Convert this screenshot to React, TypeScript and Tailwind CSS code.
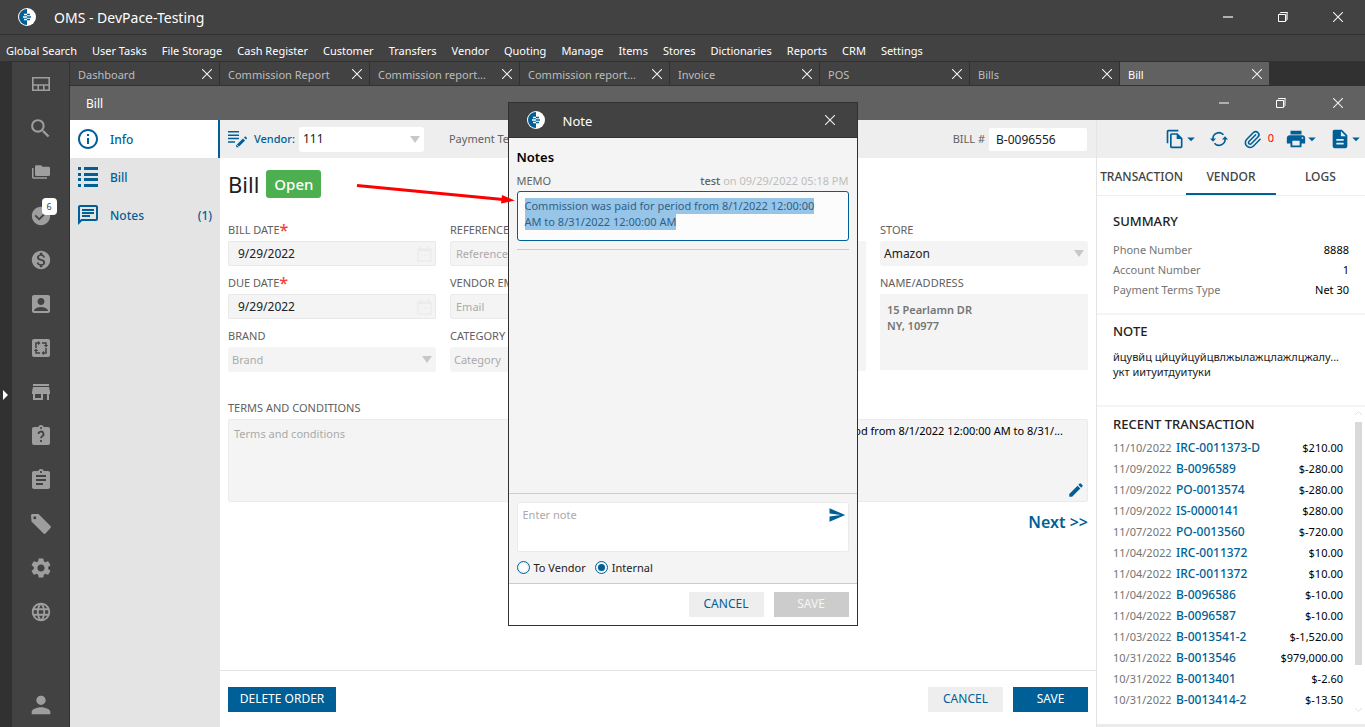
import { useState, type ReactNode } from "react";
import { Paperclip } from "lucide-react";
import {
	MdAccountBox,
	MdArrowDropDown,
	MdAssignment,
	MdCheckCircle,
	MdDescription,
	MdEdit,
	MdInfoOutline,
	MdLanguage,
	MdMonetizationOn,
	MdOutlineChat,
	MdOutlineFileCopy,
	MdPerson,
	MdPrint,
	MdSearch,
	MdSend,
	MdSettings,
	MdStore,
} from "react-icons/md";

const MENU = [
	"Global Search",
	"User Tasks",
	"File Storage",
	"Cash Register",
	"Customer",
	"Transfers",
	"Vendor",
	"Quoting",
	"Manage",
	"Items",
	"Stores",
	"Dictionaries",
	"Reports",
	"CRM",
	"Settings",
];

const TABS = [
	"Dashboard",
	"Commission Report",
	"Commission report...",
	"Commission report...",
	"Invoice",
	"POS",
	"Bills",
	"Bill",
];

const TRANSACTIONS = [
	["11/10/2022", "IRC-0011373-D", "$210.00"],
	["11/09/2022", "B-0096589", "$-280.00"],
	["11/09/2022", "PO-0013574", "$-280.00"],
	["11/09/2022", "IS-0000141", "$280.00"],
	["11/07/2022", "PO-0013560", "$-720.00"],
	["11/04/2022", "IRC-0011372", "$10.00"],
	["11/04/2022", "IRC-0011372", "$10.00"],
	["11/04/2022", "B-0096586", "$-10.00"],
	["11/04/2022", "B-0096587", "$-10.00"],
	["11/03/2022", "B-0013541-2", "$-1,520.00"],
	["10/31/2022", "B-0013546", "$979,000.00"],
	["10/31/2022", "B-0013401", "$-2.60"],
	["10/31/2022", "B-0013414-2", "$-13.50"],
];

export default function App() {
	return (
		<div className="flex h-screen flex-col overflow-hidden bg-[#424242] font-['Noto_Sans',sans-serif] text-[12px] leading-4 text-[#212121]">
			<TitleBar />
			<MenuBar />
			<div className="flex min-h-0 flex-1">
				<div className="flex w-3 shrink-0 items-center bg-[#313131]">
					<svg className="ml-[3px] h-2.5 w-[5px]" viewBox="0 0 5 10">
						<path d="M0 0l5 5-5 5z" fill="#fff" />
					</svg>
				</div>
				<Sidebar />
				<div className="flex min-w-0 flex-1 flex-col">
					<TabStrip />
					<header className="flex h-[34px] shrink-0 items-center bg-[#616161] pl-4 text-white">
						<h1 className="flex-1 pt-0.5">Bill</h1>
						<WindowButtons className="gap-[25px]" />
					</header>
					<div className="flex min-h-0 flex-1 bg-white">
						<SectionNav />
						<BillForm />
						<DetailsPanel />
					</div>
				</div>
			</div>
			<NoteDialog />
		</div>
	);
}

const TitleBar = () => (
	<header className="flex h-[35px] shrink-0 items-center border-b border-[#313131] pl-[18px] text-white">
		<Logo />
		<span className="ml-[18px] flex-1 pt-0.5 text-[14px]">OMS - DevPace-Testing</span>
		<WindowButtons className="gap-[23px]" />
	</header>
);

const MenuBar = () => (
	<nav className="flex h-[27px] shrink-0 items-end gap-[15px] border-b border-[#313131] px-1.5 pb-[2px] text-[11px] text-white">
		{MENU.map((item) => (
			<button key={item} className="whitespace-nowrap">
				{item}
			</button>
		))}
	</nav>
);

const WindowButtons = ({ className }: { className: string }) => (
	<div className={`flex pr-[11px] ${className}`}>
		<button aria-label="Minimize" className="flex h-8 w-8 items-center justify-center">
			<span className="h-0.5 w-2.5 bg-[#b0b0b0]" />
		</button>
		<button aria-label="Restore" className="flex h-8 w-8 items-center justify-center">
			<svg className="size-3" viewBox="0 0 12 12" fill="none" stroke="#fff">
				<path d="M9 3.500l1.500-2v7L9 10z" fill="#b0b0b0" stroke="#b0b0b0" />
				<path d="M1.500 3.500h7v7h-7zM3 2.500l.5-1h7" />
			</svg>
		</button>
		<button aria-label="Close" className="flex h-8 w-8 items-center justify-center">
			<Cross />
		</button>
	</div>
);

const Cross = () => (
	<svg className="size-2.5" viewBox="0 0 10 10" stroke="#f0f0f0" strokeWidth="1.1">
		<path d="M0 0l10 10M10 0L0 10" />
	</svg>
);

const Logo = () => (
	<svg className="size-[18px] shrink-0" viewBox="0 0 18 18">
		<circle cx="9" cy="9" r="9" fill="#fff" />
		<path d="M9 1a8 8 0 0 0 0 16z" fill="#005f96" />
		<path d="M6 6.500h3M5 9h4M6 11.500h3" stroke="#fff" strokeWidth="1.300" />
		<path d="M9 6.500h3M9 9h4M9 11.500h3" stroke="#005f96" strokeWidth="1.300" />
	</svg>
);

const Sidebar = () => (
	<aside className="flex w-[58px] shrink-0 flex-col items-center border-r border-[#313131] text-[#9e9e9e]">
		<SideButton label="Dashboard">
			<svg width="18" height="14" viewBox="0 0 18 14" fill="none" stroke="currentColor" strokeWidth="1.600">
				<path d="M.8.8h16.400v12.400H.8zM.8 8h16.400M6.200 8v5M11.800 8v5" />
			</svg>
		</SideButton>
		<SideButton label="Search">
			<MdSearch size={25} />
		</SideButton>
		<SideButton label="Files">
			<svg width="18" height="16" viewBox="0 0 24 24" preserveAspectRatio="none" fill="currentColor">
				<path d="M22 4h-8l-2-2H6a2 2 0 0 0-2 2v12a2 2 0 0 0 2 2h16a2 2 0 0 0 2-2V6a2 2 0 0 0-2-2M2 6H0v14a2 2 0 0 0 2 2h18v-2H2z" />
			</svg>
		</SideButton>
		<SideButton label="Tasks">
			<MdCheckCircle size={22} />
			<span className="absolute top-1 right-0.5 flex h-[17px] w-[15px] items-center justify-center rounded-[4px] bg-white text-[9px] text-[#424242]">
				6
			</span>
		</SideButton>
		<SideButton label="Payments">
			<MdMonetizationOn size={22} />
		</SideButton>
		<SideButton label="Contacts">
			<MdAccountBox size={24} />
		</SideButton>
		<SideButton label="Exchange">
			<svg width="18" height="18" viewBox="0 0 18 18">
				<rect width="18" height="18" rx="2" fill="currentColor" />
				<g fill="none" stroke="#424242" strokeWidth="1.500">
					<path d="M4 9V4h3M10 4h4v3M14 9v5h-3M8 14H4v-3" />
				</g>
				<path d="M6 1.800L8.500 4 6 6.200zM11.800 6h4.400L14 8.500zM12 11.800v4.400L9.500 14zM1.800 12h4.400L4 9.500z" fill="#424242" />
			</svg>
		</SideButton>
		<SideButton label="Store">
			<MdStore size={24} />
		</SideButton>
		<SideButton label="Requests">
			<svg width="24" height="24" viewBox="0 0 24 24">
				<path
					d="M19 3h-4.200a3 3 0 0 0-5.600 0H5a2 2 0 0 0-2 2v14a2 2 0 0 0 2 2h14a2 2 0 0 0 2-2V5a2 2 0 0 0-2-2m-7 0a1 1 0 1 1 0 2 1 1 0 0 1 0-2"
					fill="currentColor"
				/>
				<path d="M9.500 10a2.500 2.500 0 1 1 3.700 2.200c-.9.500-1.200.9-1.200 2M12 16v2" fill="none" stroke="#424242" strokeWidth="1.800" />
			</svg>
		</SideButton>
		<SideButton label="Orders">
			<MdAssignment size={24} />
		</SideButton>
		<SideButton label="Tags">
			<svg width="22" height="22" viewBox="0 0 22 22">
				<path d="M2 1h6.500L20.500 13a1.500 1.500 0 0 1 0 2L15.500 20.500a1.500 1.500 0 0 1-2 0L1.500 8.500 1 2z" fill="currentColor" />
				<circle cx="4.800" cy="4.800" r="1.500" fill="#424242" />
			</svg>
		</SideButton>
		<SideButton label="Settings">
			<MdSettings size={24} />
		</SideButton>
		<SideButton label="Language">
			<MdLanguage size={22} />
		</SideButton>
		<div className="mt-auto">
			<SideButton label="Account">
				<MdPerson size={28} />
			</SideButton>
		</div>
	</aside>
);

const SideButton = ({ label, children }: { label: string; children: ReactNode }) => (
	<button aria-label={label} className="relative flex h-11 w-9 shrink-0 items-center justify-center">
		{children}
	</button>
);

const TabStrip = () => (
	<div className="flex h-6 shrink-0 border-b border-[#313131] bg-[#313131] text-[11px]">
		{TABS.map((tab, i) => {
			const active = i === TABS.length - 1;
			return (
				<div
					key={i}
					className={`flex w-[150px] items-center border-r border-[#313131] pr-1.5 pl-2 ${
						active ? "bg-[#616161] text-white" : "bg-[#424242] text-[#bdbdbd]"
					}`}
				>
					<button className="flex-1 truncate pt-0.5 text-left">{tab}</button>
					<button aria-label={`Close ${tab}`} className="p-px">
						<Cross />
					</button>
				</div>
			);
		})}
	</div>
);

const SectionNav = () => (
	<nav className="w-[150px] shrink-0 bg-[#e4e4e4] text-[#005f96]">
		<a href="#info" className="flex h-[38px] items-center gap-[10px] border-r-2 border-[#005f96] bg-white pl-[6px] font-medium">
			<MdInfoOutline size={24} />
			<span className="pt-0.5">Info</span>
		</a>
		<a href="#bill" className="flex h-[38px] items-center gap-[10px] pl-[6px] font-medium">
			<svg width="24" height="24" viewBox="0 0 24 24" fill="currentColor">
				<path d="M2 2h3v3H2zM8 2h14v3H8zM2 8h3v3H2zM8 8h14v3H8zM2 13h3v3H2zM8 13h14v3H8zM2 19h3v3H2zM8 19h14v3H8z" />
			</svg>
			<span className="pt-0.5">Bill</span>
		</a>
		<a href="#notes" className="flex h-[38px] items-center gap-[10px] pr-2 pl-[6px] font-medium">
			<MdOutlineChat size={24} />
			<span className="flex-1 pt-0.5">Notes</span>
			<span className="pt-0.5">(1)</span>
		</a>
	</nav>
);

const BillForm = () => (
	<main className="flex min-w-0 flex-1 flex-col">
		<div className="flex h-[38px] shrink-0 items-center bg-[#eeeeee] px-2 text-[11px] text-[#616161]">
			<svg className="text-[#005f96]" width="19" height="18" viewBox="0 0 19 18" fill="none" stroke="currentColor" strokeWidth="1.500">
				<path d="M0 1.800h11M0 5.200h11M0 8.600h11M0 12h7" />
				<path d="M10 15.500L16 9.500" strokeWidth="3" />
				<path d="M8.200 17.200v-2.700l2.700 2.700zM16 7.500l1.200-1.200 2 2L18 9.500z" fill="currentColor" stroke="none" />
			</svg>
			<label htmlFor="vendor" className="ml-[7px] font-medium text-[#005f96]">
				Vendor:
			</label>
			<div className="ml-1 w-[125px]">
				<SelectBox id="vendor" value="111" className="bg-white text-[12px] text-[#212121]" />
			</div>
			<span className="ml-[25px] flex-1">Payment Terms</span>
			<label htmlFor="bill-number">BILL #</label>
			<input
				id="bill-number"
				defaultValue="B-0096556"
				className="mr-px ml-1 h-[23px] w-[98px] rounded-[2px] bg-white px-[7px] text-[12px] text-[#212121]"
			/>
		</div>
		<div className="min-h-0 flex-1 px-2">
			<div className="flex h-[52px] items-center gap-[7px]">
				<h2 className="text-[22px] leading-7">Bill</h2>
				<span className="rounded-[3px] bg-[#4caf50] px-2 text-[15px] leading-7 font-medium text-white">Open</span>
			</div>
			<div className="mt-3 grid grid-cols-[208px_minmax(0,1fr)_208px] gap-x-[14px]">
				<div className="flex flex-col gap-[9px]">
					<Field id="bill-date" label="BILL DATE" required>
						<DateBox id="bill-date" />
					</Field>
					<Field id="due-date" label="DUE DATE" required>
						<DateBox id="due-date" />
					</Field>
					<Field id="brand" label="BRAND">
						<SelectBox id="brand" value="Brand" className="bg-[#f4f4f4] text-[11px] text-[#aaaaaa]" />
					</Field>
				</div>
				<div className="grid grid-cols-2 gap-x-[14px]">
					<div className="flex flex-col gap-[9px]">
						<Field id="reference" label="REFERENCE">
							<TextBox id="reference" placeholder="Reference" />
						</Field>
						<Field id="email" label="VENDOR EMAIL">
							<TextBox id="email" placeholder="Email" />
						</Field>
						<Field id="category" label="CATEGORY">
							<SelectBox id="category" value="Category" className="bg-[#f4f4f4] text-[11px] text-[#aaaaaa]" />
						</Field>
					</div>
					<textarea aria-label="Description" className="mt-[19px] block h-[130px] w-full resize-none bg-[#f4f4f4]" />
				</div>
				<div className="flex flex-col gap-[9px]">
					<Field id="store" label="STORE">
						<SelectBox id="store" value="Amazon" className="bg-[#f4f4f4] text-[12px] text-[#212121]" />
					</Field>
					<Field id="address" label="NAME/ADDRESS">
						<textarea
							id="address"
							readOnly
							value={"15 Pearlamn DR\nNY, 10977"}
							className="block h-[76px] w-full resize-none bg-[#f4f4f4] px-[7px] py-2 text-[11px] font-semibold text-[#757575]"
						/>
					</Field>
				</div>
			</div>
			<div className="mt-7 grid grid-cols-[minmax(0,1fr)_393px] gap-x-[14px]">
				<Field id="terms" label="TERMS AND CONDITIONS">
					<textarea
						id="terms"
						placeholder="Terms and conditions"
						className="block h-[83px] w-full resize-none rounded-[2px] border border-[#ebebeb] bg-[#f4f4f4] px-[5px] py-1.5 text-[11px] placeholder:text-[#aaaaaa]"
					/>
				</Field>
				<div className="mt-[19px] flex h-[83px] flex-col justify-between rounded-[2px] border border-[#ebebeb] bg-[#f4f4f4] pt-[3px] pr-[2px] pb-[2px] pl-[5px]">
					<p className="truncate text-[11px] text-black">Commission was paid for period from 8/1/2022 12:00:00 AM to 8/31/...</p>
					<button aria-label="Edit memo" className="self-end text-[#005f96]">
						<MdEdit size={18} />
					</button>
				</div>
			</div>
			<div className="mt-2.5 flex justify-end">
				<button className="text-[16px] leading-5 font-semibold text-[#005f96]">Next &gt;&gt;</button>
			</div>
		</div>
		<footer className="flex h-[57px] shrink-0 items-center gap-[10px] border-t border-[#e4e4e4] px-2">
			<button className="h-[25px] w-[108px] bg-[#005f96] text-white">DELETE ORDER</button>
			<span className="flex-1" />
			<button className="h-[25px] w-[75px] bg-[#eeeeee] text-[#005f96]">CANCEL</button>
			<button className="h-[25px] w-[75px] bg-[#005f96] text-white">SAVE</button>
		</footer>
	</main>
);

interface FieldProps {
	id: string;
	label: string;
	required?: boolean;
	children: ReactNode;
}

const Field = ({ id, label, required, children }: FieldProps) => (
	<div>
		<label htmlFor={id} className="mb-[3px] flex h-4 text-[11px] whitespace-nowrap text-[#616161]">
			{label}
			{required && <span className="text-[16px] leading-4 font-medium text-[#f44336]">*</span>}
		</label>
		{children}
	</div>
);

const TextBox = ({ id, placeholder }: { id: string; placeholder: string }) => (
	<input
		id={id}
		placeholder={placeholder}
		className="block h-[25px] w-full rounded-[2px] border border-[#ebebeb] bg-[#f4f4f4] px-[5px] text-[11px] placeholder:text-[#aaaaaa]"
	/>
);

const DateBox = ({ id }: { id: string }) => (
	<div className="flex h-[25px] items-center rounded-[2px] border border-[#e8e8e8] bg-[#f4f4f4] pr-[3px] pl-[9px]">
		<input id={id} defaultValue="9/29/2022" className="min-w-0 flex-1" />
		<svg width="15" height="16" viewBox="0 0 15 16" fill="none" stroke="#ebebeb" strokeWidth="1.500">
			<path d="M1 3h13v12H1zM1 4.500h13M3.500 0v3M11.500 0v3M4 9h1.500M7 9h1.500M10 9h1.500" />
		</svg>
	</div>
);

const SelectBox = ({ id, value, className }: { id: string; value: string; className: string }) => (
	<div className="relative">
		<select id={id} className={`block h-[25px] w-full appearance-none rounded-[3px] pl-1 ${className}`}>
			<option>{value}</option>
		</select>
		<svg className="pointer-events-none absolute top-[9px] right-1 h-[7px] w-2.5" viewBox="0 0 10 7">
			<path d="M0 0h10L5 7z" fill="#c8c8c8" />
		</svg>
	</div>
);

const DetailsPanel = () => {
	const [tab, setTab] = useState("VENDOR");
	return (
		<aside className="flex w-[269px] shrink-0 flex-col border-l border-[#e4e4e4]">
			<div className="flex h-[38px] shrink-0 items-center justify-end bg-[#eeeeee] text-[#005f96]">
				<button aria-label="Copy" className="flex items-center">
					<MdOutlineFileCopy size={20} />
					<MdArrowDropDown size={18} className="-ml-[3px]" />
				</button>
				<button aria-label="Refresh" className="ml-2.5">
					<svg width="18" height="16" viewBox="0 0 18 16" fill="none" stroke="currentColor" strokeWidth="1.600">
						<path d="M3 8.500a6 6 0 0 1 10.500-4.700M15 7.500a6 6 0 0 1-10.500 4.700" />
						<path d="M0 7.500h6L3 10.800zM12 8.500h6L15 5.200z" fill="currentColor" stroke="none" />
					</svg>
				</button>
				<button aria-label="Attachments" className="ml-[15px] flex gap-1.5">
					<Paperclip size={19} strokeWidth={2} />
					<span className="text-[11px] leading-4 text-[#ff0000]">0</span>
				</button>
				<button aria-label="Print" className="ml-[11px] flex items-center">
					<MdPrint size={22} />
					<MdArrowDropDown size={18} className="-ml-1" />
				</button>
				<button aria-label="Documents" className="ml-2 flex items-center">
					<MdDescription size={22} />
					<MdArrowDropDown size={18} className="-ml-1" />
				</button>
			</div>
			<div className="grid h-[38px] shrink-0 grid-cols-3 border-b border-[#eeeeee] text-[#424242]">
				{["TRANSACTION", "VENDOR", "LOGS"].map((name) => (
					<button
						key={name}
						onClick={() => setTab(name)}
						className={`border-b-2 pt-0.5 font-medium ${name === tab ? "border-[#005f96]" : "border-transparent"}`}
					>
						{name}
					</button>
				))}
			</div>
			<section className="h-[119px] shrink-0 border-b-2 border-[#f4f4f4] px-4 pt-4">
				<PanelTitle>SUMMARY</PanelTitle>
				<dl className="mt-2.5 text-[11px] leading-5 text-[#757575]">
					<SummaryRow name="Phone Number" value="8888" />
					<SummaryRow name="Account Number" value="1" />
					<SummaryRow name="Payment Terms Type" value="Net 30" />
				</dl>
			</section>
			<section className="h-[92px] shrink-0 border-b-2 border-[#f4f4f4] pt-[7px] pr-3 pl-4">
				<PanelTitle>NOTE</PanelTitle>
				<p className="mt-[9px] text-[11px] leading-[15px]">
					<span className="block whitespace-nowrap">йцувйц цйцуйцуйцвлжылажцлажлцжалу...</span>
					укт иитуитдуитуки
				</p>
			</section>
			<section className="flex min-h-0 flex-1 border-b-[3px] border-[#ebebeb] pr-[3px] pl-4">
				<div className="min-w-0 flex-1 pt-2">
					<PanelTitle>RECENT TRANSACTION</PanelTitle>
					<table className="mt-1 w-full">
						<tbody>
							{TRANSACTIONS.map(([date, number, amount], i) => (
								<tr key={i} className="h-[21px]">
									<td className="w-[63px] p-0 text-[11px] text-[#757575]">{date}</td>
									<td className="p-0 font-medium">
										<a href={`#${number}`} className="text-[#005f96]">
											{number}
										</a>
									</td>
									<td className="p-0 text-right text-[11px] text-black">{amount}</td>
								</tr>
							))}
						</tbody>
					</table>
				</div>
				<div className="ml-3 flex w-[7px] flex-col items-center pt-1 pb-3">
					<Chevron d="M0 4l3.500-3.500L7 4" />
					<div className="mt-1.5 mb-auto h-[243px] w-full bg-[#d9d9d9]" />
					<Chevron d="M0 1l3.500 3.500L7 1" />
				</div>
			</section>
		</aside>
	);
};

const Chevron = ({ d }: { d: string }) => (
	<svg width="7" height="5" viewBox="0 0 7 5" fill="none" stroke="#e0e0e0">
		<path d={d} />
	</svg>
);

const PanelTitle = ({ children }: { children: ReactNode }) => (
	<h3 className="text-[13px] leading-[18px] font-medium">{children}</h3>
);

const SummaryRow = ({ name, value }: { name: string; value: string }) => (
	<div className="flex justify-between">
		<dt>{name}</dt>
		<dd className="text-black">{value}</dd>
	</div>
);

const NoteDialog = () => {
	const [target, setTarget] = useState("internal");
	return (
		<div className="fixed inset-0 flex items-center justify-center">
			<div role="dialog" aria-label="Note" className="relative flex h-[524px] w-[350px] flex-col border border-[#313131] bg-[#f4f4f4]">
				<header className="flex h-[35px] shrink-0 items-center border-b border-[#313131] bg-[#424242] pr-[22px] pl-[18px] text-white">
					<Logo />
					<h2 className="ml-[18px] flex-1 pt-0.5 text-[13px]">Note</h2>
					<button aria-label="Close note">
						<Cross />
					</button>
				</header>
				<div className="min-h-0 flex-1 px-2 pt-2.5">
					<h3 className="text-[13px] leading-[18px] font-semibold text-black">Notes</h3>
					<div className="mt-[7px] flex justify-between">
						<span className="text-[11px] text-[#616161]">MEMO</span>
						<span className="text-[11px] text-[#bdbdbd]">
							<b className="font-medium text-[#616161]">test</b> on 09/29/2022 05:18 PM
						</span>
					</div>
					<div className="mt-[2px] h-[50px] rounded-[3px] border border-[#005f96] bg-[#fcfcfc] py-1.5 pr-5 pl-[7px]">
						<p className="text-[11px]">
							<mark className="bg-[#97c5e8] pb-px text-[#2e618a]">
								Commission was paid for period from 8/1/2022 12:00:00 AM to 8/31/2022 12:00:00 AM
							</mark>
						</p>
					</div>
					<hr className="mt-2 border-[#cccccc]" />
				</div>
				<form className="h-[91px] shrink-0 border-y border-[#cccccc] px-2 pt-2">
					<div className="flex h-[50px] rounded-[2px] border border-[#ebebeb] bg-white">
						<textarea
							aria-label="Enter note"
							placeholder="Enter note"
							className="flex-1 resize-none px-[5px] py-1 text-[11px] placeholder:text-[#aaaaaa]"
						/>
						<button type="button" aria-label="Send" className="mt-[3px] mr-[2px] self-start text-[#005f96]">
							<MdSend size={18} />
						</button>
					</div>
					<div className="mt-2 flex gap-[9px] text-[11px]">
						<RadioOption label="To Vendor" checked={target === "vendor"} onChange={() => setTarget("vendor")} />
						<RadioOption label="Internal" checked={target === "internal"} onChange={() => setTarget("internal")} />
					</div>
				</form>
				<footer className="flex h-[41px] shrink-0 items-center justify-end gap-[10px] bg-white px-2">
					<button className="h-[25px] w-[75px] bg-[#eeeeee] text-[#005f96]">CANCEL</button>
					<button className="h-[25px] w-[75px] bg-[#cccccc] text-white/80" disabled>
						SAVE
					</button>
				</footer>
				{/* callout arrow pointing at the memo */}
				<svg className="pointer-events-none absolute top-[78px] -left-[153px] h-7 w-[160px]" viewBox="0 0 160 28">
					<path d="M1 4.500L147 18.500" stroke="#ff0000" strokeWidth="3" />
					<path d="M146 14l13 5.500-14 3z" fill="#ff0000" />
				</svg>
			</div>
		</div>
	);
};

interface RadioProps {
	label: string;
	checked: boolean;
	onChange: () => void;
}

const RadioOption = ({ label, checked, onChange }: RadioProps) => (
	<label className="flex items-center gap-1">
		<input
			type="radio"
			name="note-target"
			checked={checked}
			onChange={onChange}
			className="size-[13px] appearance-none rounded-full border border-[#005f96] bg-white bg-clip-content p-[2px] checked:bg-[#005f96]"
		/>
		{label}
	</label>
);
